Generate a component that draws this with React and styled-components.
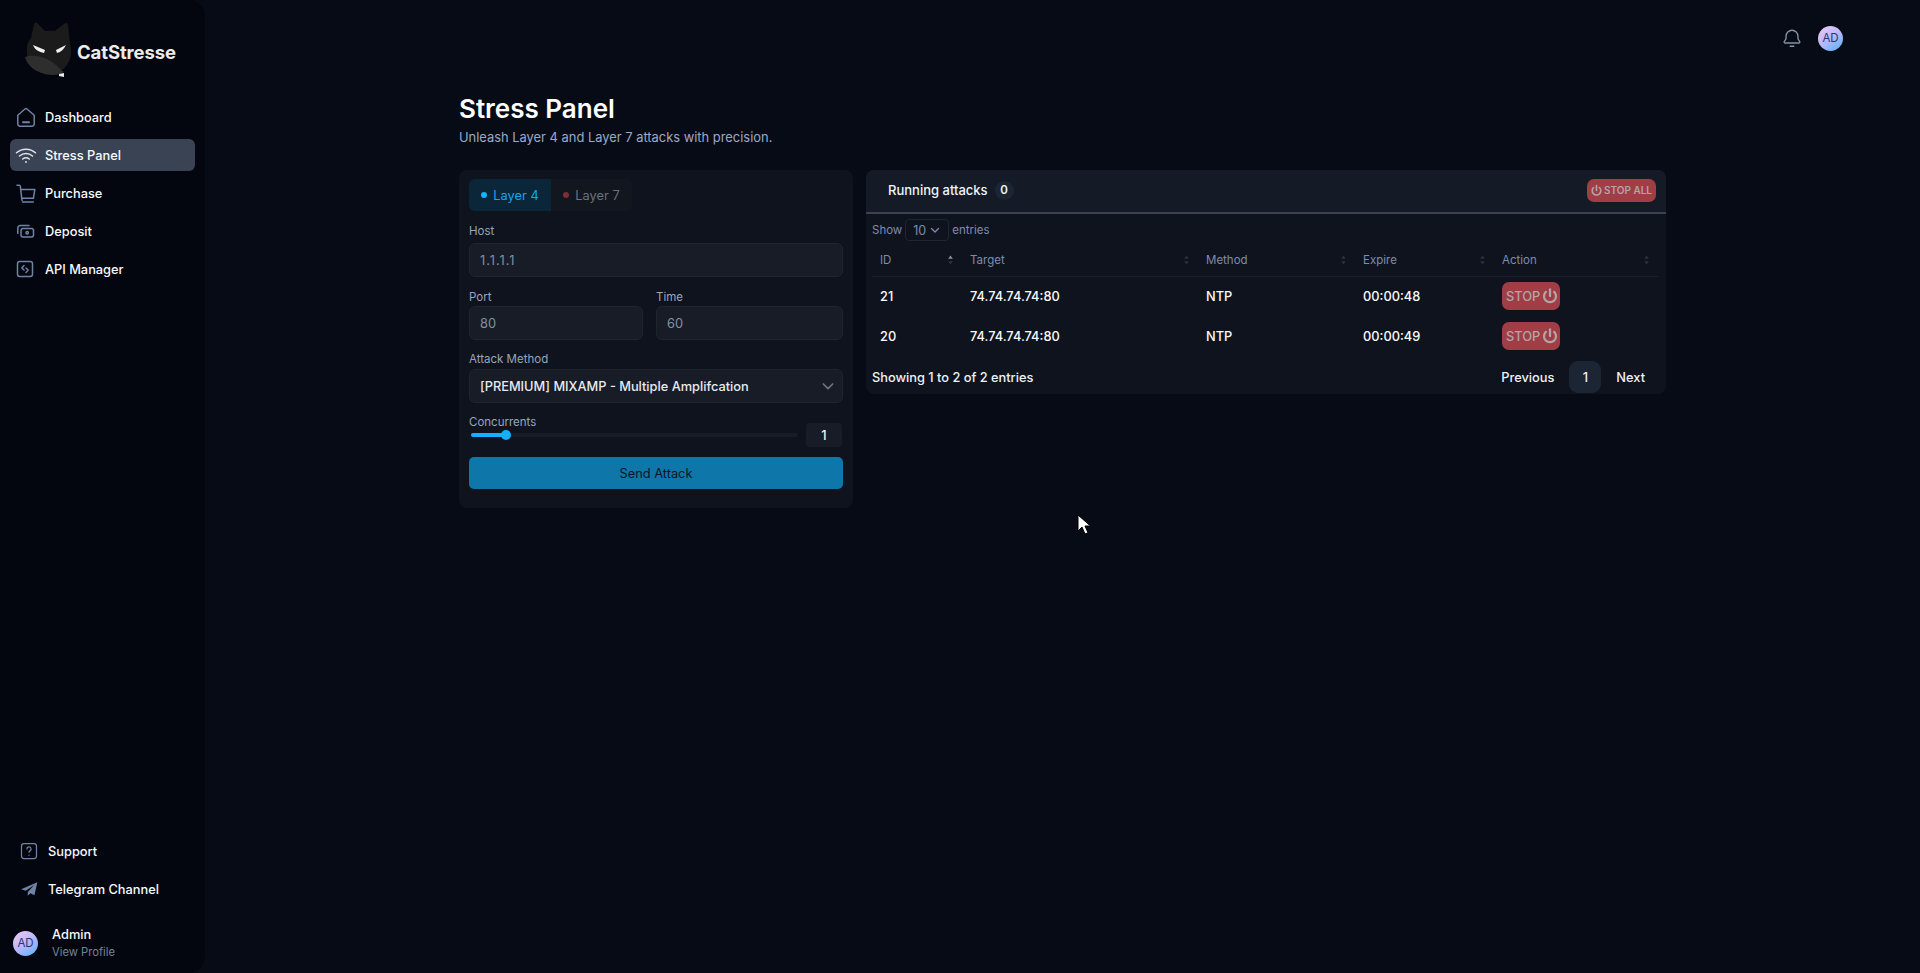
import React from 'react'
import styled, { createGlobalStyle } from 'styled-components'

const GlobalStyle = createGlobalStyle`
  html, body { margin: 0; padding: 0; background: #070b15; }
  * { box-sizing: border-box; }
  body { font-family: Inter, "Liberation Sans", sans-serif; color: #fff; overflow: hidden; }
`

const Page = styled.div`
  display: flex;
  height: 973px;
  background: #070b15;
  overflow: hidden;
`

const Sidebar = styled.aside`
  flex: 0 0 205px;
  display: flex;
  flex-direction: column;
  background: #03060e;
  border-radius: 0 16px 16px 0;
  padding: 20px 10px 0;
`

const Brand = styled.div`
  display: flex;
  align-items: center;
  gap: 3px;
  height: 58px;
  padding-left: 14px;
  margin-bottom: 23px;
  svg { flex: none; }
`

const BrandName = styled.span`
  margin-top: 5px;
  font-size: 18.5px;
  font-weight: 700;
  letter-spacing: -0.1px;
  color: #ececec;
`

const Nav = styled.nav`
  display: flex;
  flex-direction: column;
  gap: 6px;
`

const NavItem = styled.a`
  display: flex;
  align-items: center;
  gap: 7px;
  height: 32px;
  padding-left: 4px;
  border-radius: 6px;
  font-size: 12.8px;
  font-weight: 500;
  color: #f8fafc;
  background: ${p => (p.$active ? '#3a4353' : 'transparent')};
  svg { flex: none; color: ${p => (p.$active ? '#dfe4ec' : '#7082a5')}; }
`

const Spacer = styled.div`
  flex: 1;
`

const FootNav = styled.div`
  display: flex;
  flex-direction: column;
  gap: 6px;
  margin-bottom: 14px;
`

const FootItem = styled(NavItem)`
  padding-left: 9px;
  gap: 9px;
`

const Profile = styled.div`
  display: flex;
  align-items: center;
  gap: 14px;
  height: 48px;
  padding-left: 3px;
  margin-bottom: 6px;
`

const Avatar = styled.div`
  flex: none;
  display: flex;
  align-items: center;
  justify-content: center;
  width: ${p => p.$size}px;
  height: ${p => p.$size}px;
  border-radius: 50%;
  font-size: 11.5px;
  font-weight: 400;
  color: #27366b;
  background: linear-gradient(145deg, #ecc9f4 5%, #b9b7fb 50%, #5bb4ff 95%);
`

const ProfileText = styled.div`
  display: flex;
  flex-direction: column;
  gap: 3px;
`

const ProfileName = styled.span`
  font-size: 12.8px;
  font-weight: 500;
  color: #f8fafc;
`

const ProfileLink = styled.span`
  font-size: 11.2px;
  color: #75849a;
`

const Main = styled.main`
  flex: 1;
  display: flex;
  flex-direction: column;
  min-width: 0;
`

const TopBar = styled.header`
  display: flex;
  justify-content: flex-end;
  align-items: center;
  gap: 15px;
  height: 76px;
  padding-right: 77px;
  svg { color: #8391ab; }
`

const Content = styled.div`
  width: 1207px;
  margin: 0 auto;
`

const Title = styled.h1`
  margin: 17px 0 0;
  font-size: 26px;
  line-height: 32px;
  font-weight: 600;
`

const Subtitle = styled.p`
  margin: 3px 0 22px;
  font-size: 12.9px;
  line-height: 20px;
  color: #9aa9ca;
`

const Columns = styled.div`
  display: grid;
  grid-template-columns: 394px 800px;
  gap: 13px;
  align-items: start;
`

const FormCard = styled.section`
  display: flex;
  flex-direction: column;
  height: 338px;
  padding: 9px 10px 0;
  border-radius: 8px;
  background: #0f131e;
`

const Tabs = styled.div`
  display: flex;
  align-self: flex-start;
  height: 32px;
  margin-bottom: 13px;
  border-radius: 6px;
  background: #12161f;
  overflow: hidden;
`

const Tab = styled.div`
  display: flex;
  align-items: center;
  justify-content: center;
  gap: 6px;
  width: ${p => (p.$active ? 82 : 81)}px;
  font-size: 12.8px;
  color: ${p => (p.$active ? '#12a5f4' : '#6b7280')};
  background: ${p => (p.$active ? '#0c2639' : 'transparent')};
`

const Dot = styled.span`
  width: 6px;
  height: 6px;
  border-radius: 50%;
  background: ${p => p.$color};
`

const Label = styled.label`
  display: block;
  height: 14px;
  font-size: 11.5px;
  line-height: 14px;
  color: #98a6bd;
`

const Field = styled.div`
  display: flex;
  flex-direction: column;
  gap: ${p => p.$labelGap}px;
  margin-bottom: ${p => p.$gap}px;
`

const FieldRow = styled.div`
  display: grid;
  grid-template-columns: 174px 187px;
  gap: 13px;
`

const Input = styled.input`
  width: 100%;
  height: 34px;
  padding: 0 10px;
  border: 1px solid #1f2430;
  border-radius: 6px;
  outline: none;
  font-family: inherit;
  font-size: 12.8px;
  color: #8490a0;
  background: #181c27;
`

const HostInput = styled(Input)`
  letter-spacing: 1px;
`

const SelectBox = styled.div`
  display: flex;
  align-items: center;
  justify-content: space-between;
  height: 34px;
  padding: 0 6px 0 10px;
  border: 1px solid #1f2430;
  border-radius: 6px;
  font-size: 12.8px;
  font-weight: 500;
  color: #e7eaf0;
  background: #181c27;
  svg { color: #6b7280; }
`

const SliderRow = styled.div`
  display: flex;
  align-items: center;
  gap: 8px;
  height: 24px;
  margin: -6px 1px 10px 2px;
`

const Track = styled.div`
  position: relative;
  flex: 1;
  height: 4px;
  border-radius: 2px;
  background: #181c27;
`

const TrackFill = styled.div`
  height: 100%;
  border-radius: 2px;
  background: #12b0ff;
`

const Thumb = styled.span`
  position: absolute;
  top: -3px;
  width: 10px;
  height: 10px;
  border-radius: 50%;
  background: #12b0ff;
`

const SliderValue = styled.div`
  display: flex;
  align-items: center;
  justify-content: center;
  width: 36px;
  height: 24px;
  border-radius: 4px;
  font-size: 12.8px;
  font-weight: 500;
  color: #f1f5f9;
  background: #181c27;
`

const SendButton = styled.button`
  height: 32px;
  border: none;
  border-radius: 5px;
  font-family: inherit;
  font-size: 12.8px;
  color: #0a1626;
  background: #0e76a8;
`

const TableCard = styled.section`
  display: flex;
  flex-direction: column;
  height: 224px;
  border-radius: 8px;
  background: #0f131e;
  overflow: hidden;
`

const CardHeader = styled.div`
  display: flex;
  align-items: center;
  justify-content: space-between;
  height: 44px;
  padding: 0 10px 2px 9px;
  border-bottom: 2px solid #3a4152;
  background: #141a26;
`

const RunningTab = styled.div`
  display: flex;
  align-items: center;
  gap: 7px;
  padding-left: 13px;
  font-size: 13px;
  font-weight: 500;
  color: #f1f5f9;
`

const CountBadge = styled.span`
  display: flex;
  align-items: center;
  justify-content: center;
  width: 19px;
  height: 19px;
  border-radius: 50%;
  font-size: 11.5px;
  font-weight: 600;
  background: #1c2533;
`

const StopAll = styled.button`
  display: flex;
  align-items: center;
  gap: 1px;
  height: 23px;
  padding: 0 4px 0 3px;
  border: none;
  border-radius: 7px;
  font-family: inherit;
  font-size: 10px;
  font-weight: 600;
  color: #b5a3a8;
  background: #a13d45;
`

const Controls = styled.div`
  display: flex;
  align-items: center;
  gap: 3px;
  height: 22px;
  margin: 5px 0 0 6px;
  font-size: 11.5px;
  color: #7d8cae;
`

const PageSize = styled.div`
  display: flex;
  align-items: center;
  gap: 3px;
  width: 44px;
  height: 22px;
  padding-left: 7px;
  border: 1px solid #1f2533;
  border-radius: 4px;
  font-size: 12.5px;
  svg { color: #7d8cae; }
`

const Table = styled.table`
  width: 786px;
  margin: 6px 0 0 6px;
  border-collapse: collapse;
  table-layout: fixed;
`

const HeadCell = styled.th`
  position: relative;
  height: 29px;
  padding: 0 8px 2px;
  border-bottom: 1px solid #1a1f2b;
  font-size: 11.5px;
  font-weight: 400;
  text-align: left;
  color: #7d8cae;
  svg { position: absolute; right: 9px; top: 8px; }
`

const Cell = styled.td`
  height: 40px;
  padding: 0 8px;
  font-size: 12.8px;
  font-weight: 500;
  color: #f8fafc;
`

const StopButton = styled.button`
  display: flex;
  align-items: center;
  gap: 1px;
  height: 28px;
  padding: 0 1px 0 4px;
  border: none;
  border-radius: 7px;
  font-family: inherit;
  font-size: 12.8px;
  font-weight: 500;
  color: #b5a3a8;
  background: #a13d45;
`

const Footer = styled.div`
  display: flex;
  align-items: center;
  justify-content: space-between;
  height: 32px;
  margin: 5px 21px 0 6px;
  font-size: 12.8px;
  font-weight: 500;
  color: #eef2f7;
`

const Pager = styled.div`
  display: flex;
  align-items: center;
  gap: 15px;
`

const PageNumber = styled.span`
  display: flex;
  align-items: center;
  justify-content: center;
  width: 32px;
  height: 32px;
  border-radius: 9px;
  background: #1c2533;
`

const CursorMark = styled.svg`
  position: absolute;
  left: 1077px;
  top: 514px;
`

const icon = {
  width: 24,
  height: 24,
  viewBox: '0 0 24 24',
  fill: 'none',
  stroke: 'currentColor',
  strokeWidth: 1.5,
  strokeLinecap: 'round',
  strokeLinejoin: 'round',
}

const HomeIcon = () => (
  <svg {...icon}>
    <path d="M3.800 10.200 11 4a1.500 1.500 0 0 1 2 0l7.200 6.200V19a2.200 2.200 0 0 1-2.200 2.200H6A2.200 2.200 0 0 1 3.800 19z" />
    <path d="M9 17.200h6" strokeWidth="2" />
  </svg>
)

const WifiIcon = () => (
  <svg {...icon}>
    <path d="M2.500 9.800c5.400-4.800 13.600-4.800 19 0" />
    <path d="M5.500 13c3.700-3.200 9.300-3.200 13 0" />
    <path d="M8.700 16c2-1.500 4.600-1.500 6.600 0" />
    <path d="M12 19v.1" strokeWidth="1.800" />
  </svg>
)

const CartIcon = () => (
  <svg {...icon}>
    <path d="M3 4.200h2.200c.6 0 1 .4 1.100 1L8 19.500" />
    <path d="M6.800 8.500h14l-1.400 8.800H8" />
    <path d="M8.500 21h10.800" />
  </svg>
)

const DepositIcon = () => (
  <svg {...icon}>
    <path d="M3.800 14.500V9a2.500 2.500 0 0 1 2.500-2.500H15" />
    <rect x="7" y="9.500" width="12.500" height="8.500" rx="2" />
    <circle cx="13.200" cy="13.800" r="1.200" />
  </svg>
)

const ApiIcon = () => (
  <svg {...icon}>
    <rect x="3.500" y="4.500" width="15" height="15" rx="2.200" />
    <path d="M10 8.500 7.800 11l2.200 2" />
    <path d="M12 11l2.200 2-2.200 2.500" />
  </svg>
)

const HelpIcon = () => (
  <svg {...icon} width="20" height="20">
    <rect x="3" y="3" width="18" height="18" rx="3" />
    <path d="M9.500 9.500a2.500 2.500 0 1 1 3.600 2.300c-.8.400-1.100.9-1.100 1.700" />
    <path d="M12 17v.1" />
  </svg>
)

const PlaneIcon = () => (
  <svg width="20" height="20" viewBox="0 0 24 24" fill="currentColor">
    <path d="M22 4 2.500 12.300l5.500 1.800L18 7.500l-7.500 8v4.500l3.200-3 4.800 2.500z" />
  </svg>
)

const BellIcon = () => (
  <svg {...icon} width="22" height="22">
    <path d="M5.500 12V10a6.500 6.500 0 0 1 13 0v2c0 1.800 1.500 3 2 4.200.2.700-.3 1.300-1 1.300h-15c-.7 0-1.200-.6-1-1.300.5-1.200 2-2.400 2-4.200z" />
    <path d="M10 21h4" />
  </svg>
)

const Chevron = ({ size }) => (
  <svg width={size} height={size} viewBox="0 0 24 24" fill="none" stroke="currentColor" strokeWidth="2.600" strokeLinecap="round" strokeLinejoin="round">
    <path d="m5 9 7 7 7-7" />
  </svg>
)

const PowerIcon = ({ size }) => (
  <svg width={size} height={size} viewBox="0 0 24 24" fill="none" stroke="currentColor" strokeWidth="3" strokeLinecap="round">
    <path d="M12 3v9" />
    <path d="M6.500 6.500a8 8 0 1 0 11 0" />
  </svg>
)

const SortIcon = ({ active }) => (
  <svg width="5" height="10" viewBox="0 0 5 10">
    <path d="M2.500 0.500 4.800 3.800H.2z" fill={active ? '#8a94a8' : '#2b3240'} />
    <path d="M2.500 9.500.2 6.200h4.600z" fill="#2b3240" />
  </svg>
)

const CatLogo = () => (
  <svg width="50" height="58" viewBox="0 0 50 58">
    <path d="M10 4 C11 2 13 2 14 4 L21 11 C24 10.500 28 10.500 31 11 L40 4 C42 2 44 3 44 6 L46 24 C49 34 46 44 37 51 L13 51 C5 47 2 36 3 28 C3 22 6 20 7 18 Z" fill="#1b1b1b" />
    <path d="M1 37 C8 34 22 36 32 45 C35 48 38 51 40 52 C34 56 24 56 15 52 C8 49 3 44 1 37 Z" fill="#2e2e2e" />
    <path d="M35 54 L40 53 L40 57 L35 56 Z" fill="#e8e8e8" />
    <path d="M9 25 L21 30 L20 33 C15 32 11 30 9 25 Z" fill="#f0f0f0" />
    <path d="M42 25 L32 30 L33 33 C37 32 40 29 42 25 Z" fill="#f0f0f0" />
  </svg>
)

const CursorIcon = () => (
  <CursorMark width="14" height="22" viewBox="0 0 14 22">
    <path d="M1 1v16l4-4 3 7 3-1.300-3-6.700h5.500z" fill="#fff" stroke="#000" strokeWidth="1" />
  </CursorMark>
)

const navItems = [
  { label: 'Dashboard', Icon: HomeIcon },
  { label: 'Stress Panel', Icon: WifiIcon, active: true },
  { label: 'Purchase', Icon: CartIcon },
  { label: 'Deposit', Icon: DepositIcon },
  { label: 'API Manager', Icon: ApiIcon },
]

const columns = [
  { label: 'ID', width: 90, active: true },
  { label: 'Target', width: 236 },
  { label: 'Method', width: 157 },
  { label: 'Expire', width: 139 },
  { label: 'Action', width: 164 },
]

const attacks = [
  { id: 21, target: '74.74.74.74:80', method: 'NTP', expire: '00:00:48' },
  { id: 20, target: '74.74.74.74:80', method: 'NTP', expire: '00:00:49' },
]

export default function App() {
  return (
    <Page>
      <GlobalStyle />
      <Sidebar>
        <Brand>
          <CatLogo />
          <BrandName>CatStresse</BrandName>
        </Brand>
        <Nav>
          {navItems.map(({ label, Icon, active }) => (
            <NavItem key={label} $active={active}>
              <Icon />
              {label}
            </NavItem>
          ))}
        </Nav>
        <Spacer />
        <FootNav>
          <FootItem><HelpIcon />Support</FootItem>
          <FootItem><PlaneIcon />Telegram Channel</FootItem>
        </FootNav>
        <Profile>
          <Avatar $size={25}>AD</Avatar>
          <ProfileText>
            <ProfileName>Admin</ProfileName>
            <ProfileLink>View Profile</ProfileLink>
          </ProfileText>
        </Profile>
      </Sidebar>
      <Main>
        <TopBar>
          <BellIcon />
          <Avatar $size={25}>AD</Avatar>
        </TopBar>
        <Content>
          <Title>Stress Panel</Title>
          <Subtitle>Unleash Layer 4 and Layer 7 attacks with precision.</Subtitle>
          <Columns>
            <FormCard>
              <Tabs>
                <Tab $active><Dot $color="#14b4ff" />Layer 4</Tab>
                <Tab><Dot $color="#7f2d36" />Layer 7</Tab>
              </Tabs>
              <Field $labelGap={5} $gap={13}>
                <Label>Host</Label>
                <HostInput defaultValue="1.1.1.1" />
              </Field>
              <FieldRow>
                <Field $labelGap={2} $gap={12}>
                  <Label>Port</Label>
                  <Input defaultValue="80" />
                </Field>
                <Field $labelGap={2} $gap={12}>
                  <Label>Time</Label>
                  <Input defaultValue="60" />
                </Field>
              </FieldRow>
              <Field $labelGap={3} $gap={12}>
                <Label>Attack Method</Label>
                <SelectBox>
                  [PREMIUM] MIXAMP - Multiple Amplifcation
                  <Chevron size={16} />
                </SelectBox>
              </Field>
              <Label>Concurrents</Label>
              <SliderRow>
                <Track>
                  <TrackFill style={{ width: 35 }} />
                  <Thumb style={{ left: 30 }} />
                </Track>
                <SliderValue>1</SliderValue>
              </SliderRow>
              <SendButton>Send Attack</SendButton>
            </FormCard>
            <TableCard>
              <CardHeader>
                <RunningTab>
                  Running attacks
                  <CountBadge>0</CountBadge>
                </RunningTab>
                <StopAll><PowerIcon size={13} />STOP ALL</StopAll>
              </CardHeader>
              <Controls>
                Show
                <PageSize>10<Chevron size={12} /></PageSize>
                <span>entries</span>
              </Controls>
              <Table>
                <colgroup>
                  {columns.map(col => <col key={col.label} width={col.width} />)}
                </colgroup>
                <thead>
                  <tr>
                    {columns.map(col => (
                      <HeadCell key={col.label}>
                        {col.label}
                        <SortIcon active={col.active} />
                      </HeadCell>
                    ))}
                  </tr>
                </thead>
                <tbody>
                  {attacks.map(row => (
                    <tr key={row.id}>
                      <Cell>{row.id}</Cell>
                      <Cell>{row.target}</Cell>
                      <Cell>{row.method}</Cell>
                      <Cell>{row.expire}</Cell>
                      <Cell><StopButton>STOP<PowerIcon size={18} /></StopButton></Cell>
                    </tr>
                  ))}
                </tbody>
              </Table>
              <Footer>
                Showing 1 to 2 of 2 entries
                <Pager>
                  <span>Previous</span>
                  <PageNumber>1</PageNumber>
                  <span>Next</span>
                </Pager>
              </Footer>
            </TableCard>
          </Columns>
        </Content>
      </Main>
      <CursorIcon />
    </Page>
  )
}
